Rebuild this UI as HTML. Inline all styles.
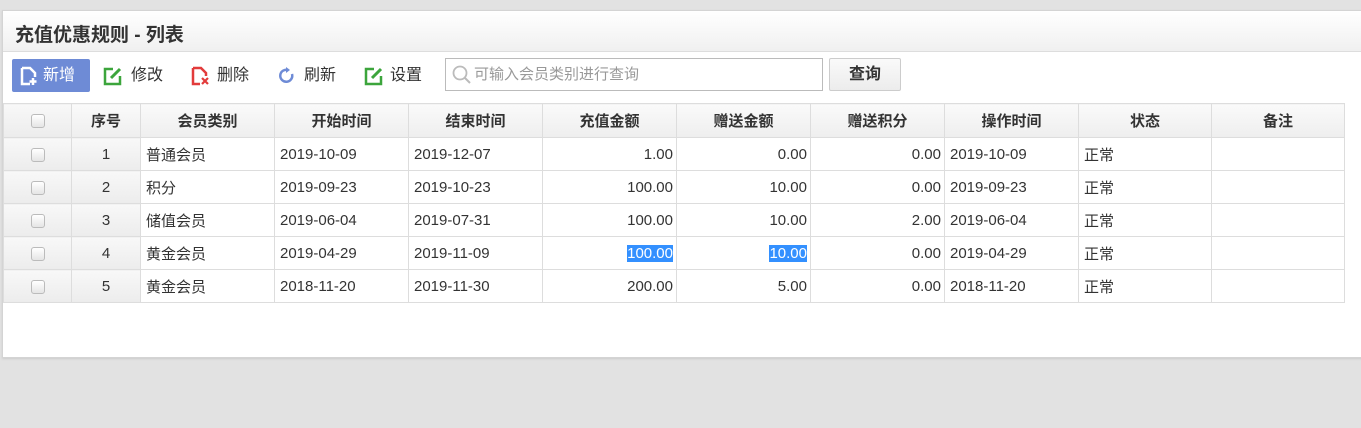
<!DOCTYPE html>
<html><head><meta charset="utf-8"><style>
*{box-sizing:border-box;margin:0;padding:0}
body{width:1361px;height:428px;overflow:hidden;background:#e2e2e2;font-family:"Liberation Sans","Noto Sans CJK SC",sans-serif;font-size:14px;color:#333;position:relative}
.panel{position:absolute;left:2px;top:10px;width:1361px;height:348px;background:#fff;border:1px solid #d4d4d4;box-shadow:0 1px 2px #ccc}
.title{height:41px;background:linear-gradient(#fff,#f0f0f0);border-bottom:1px solid #ddd;font-size:19px;font-weight:bold;padding:9px 0 0 12px;color:#333}
.tb{height:51px;position:relative}
.btn{position:absolute;top:7px;height:33px;line-height:33px;font-size:16px;color:#333}
.btn svg{position:absolute;left:0;top:7px}
.new{left:9px;width:78px;background:#6e8bd6;color:#fff;border-radius:2px}
.search{position:absolute;left:442px;top:6px;width:378px;height:33px;border:1px solid #bbb;color:#999;font-size:15px;line-height:31px;padding-left:28px}
.q{position:absolute;left:826px;top:6px;width:72px;height:33px;border:1px solid #ccc;background:linear-gradient(#fafafa,#ececec);font-weight:bold;font-size:16px;text-align:center;line-height:31px;border-radius:2px}
table{border-collapse:collapse;position:absolute;left:0;top:92px}
td,th{border:1px solid #ddd;height:33px;font-size:15px;padding:0 5px}
th{background:linear-gradient(#fafafa,#eee);font-weight:bold;height:34px}
td.c,th.c{background:linear-gradient(#f8f8f8,#ececec)}
.cb{display:inline-block;width:14px;height:14px;border:1px solid #bbb;border-radius:3px;background:linear-gradient(#fff,#e5e5e5);vertical-align:middle}
.r{text-align:right;padding-right:3px}
.ctr{text-align:center}
.sel{background:#3390ff;color:#fff}
</style></head><body>
<div class="panel">
<div class="title">充值优惠规则 - 列表</div>
<div class="tb">
<div class="btn new"><svg style="left:7px" width="20" height="20" viewBox="0 0 20 20"><path d="M3 2h8l5 5v4M3 2v16h8" fill="none" stroke="#fff" stroke-width="2.5"/><path d="M14 12v7M10.5 15.5h7" stroke="#fff" stroke-width="2.5"/></svg><span style="padding-left:31px">新增</span></div>
<div class="btn" style="left:100px"><svg width="20" height="20" viewBox="0 0 20 20"><path d="M10 3H2v15h15v-8" fill="none" stroke="#3ca53c" stroke-width="2.5"/><path d="M8 12l9-9" stroke="#3ca53c" stroke-width="3"/></svg><span style="padding-left:28px">修改</span></div>
<div class="btn" style="left:187px"><svg width="20" height="20" viewBox="0 0 20 20"><path d="M3 2h8l5 5v3M3 2v16h7" fill="none" stroke="#e23b3b" stroke-width="2.5"/><path d="M12 12l6 6M18 12l-6 6" stroke="#e23b3b" stroke-width="2.2"/></svg><span style="padding-left:27px">删除</span></div>
<div class="btn" style="left:274px"><svg width="20" height="20" viewBox="0 0 20 20"><path d="M15 8a6 6 0 1 1-4-4" fill="none" stroke="#6e8bd6" stroke-width="2.5"/><path d="M9 1l4 3-4 3z" fill="#6e8bd6"/></svg><span style="padding-left:27px">刷新</span></div>
<div class="btn" style="left:361px"><svg width="20" height="20" viewBox="0 0 20 20"><path d="M10 3H2v15h15v-8" fill="none" stroke="#3ca53c" stroke-width="2.5"/><path d="M8 12l9-9" stroke="#3ca53c" stroke-width="3"/></svg><span style="padding-left:26px">设置</span></div>
<div class="search"><svg style="position:absolute;left:6px;top:6px" width="20" height="20" viewBox="0 0 20 20"><circle cx="8" cy="8" r="6.5" fill="none" stroke="#bbb" stroke-width="1.8"/><path d="M13 13l5 5" stroke="#bbb" stroke-width="2"/></svg>可输入会员类别进行查询</div>
<div class="q">查询</div>
</div>
<table>
<tr><th class="c" style="width:68px"><span class="cb"></span></th><th style="width:69px">序号</th><th style="width:134px">会员类别</th><th style="width:134px">开始时间</th><th style="width:134px">结束时间</th><th style="width:134px">充值金额</th><th style="width:134px">赠送金额</th><th style="width:134px">赠送积分</th><th style="width:134px">操作时间</th><th style="width:133px">状态</th><th style="width:133px">备注</th></tr>
<tr><td class="c ctr"><span class="cb"></span></td><td class="c ctr">1</td><td>普通会员</td><td>2019-10-09</td><td>2019-12-07</td><td class="r">1.00</td><td class="r">0.00</td><td class="r">0.00</td><td>2019-10-09</td><td>正常</td><td></td></tr>
<tr><td class="c ctr"><span class="cb"></span></td><td class="c ctr">2</td><td>积分</td><td>2019-09-23</td><td>2019-10-23</td><td class="r">100.00</td><td class="r">10.00</td><td class="r">0.00</td><td>2019-09-23</td><td>正常</td><td></td></tr>
<tr><td class="c ctr"><span class="cb"></span></td><td class="c ctr">3</td><td>储值会员</td><td>2019-06-04</td><td>2019-07-31</td><td class="r">100.00</td><td class="r">10.00</td><td class="r">2.00</td><td>2019-06-04</td><td>正常</td><td></td></tr>
<tr><td class="c ctr"><span class="cb"></span></td><td class="c ctr">4</td><td>黄金会员</td><td>2019-04-29</td><td>2019-11-09</td><td class="r"><span class="sel">100.00</span></td><td class="r"><span class="sel">10.00</span></td><td class="r">0.00</td><td>2019-04-29</td><td>正常</td><td></td></tr>
<tr><td class="c ctr"><span class="cb"></span></td><td class="c ctr">5</td><td>黄金会员</td><td>2018-11-20</td><td>2019-11-30</td><td class="r">200.00</td><td class="r">5.00</td><td class="r">0.00</td><td>2018-11-20</td><td>正常</td><td></td></tr>
</table>
</div>
</body></html>
